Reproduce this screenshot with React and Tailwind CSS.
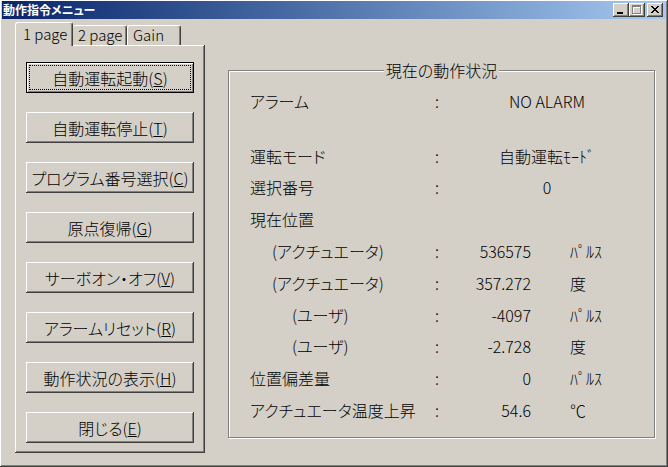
import React from 'react';

// classic 3D bevel, written out in full so Tailwind picks it up
const RAISED = "shadow-[inset_-1px_-1px_#404040,inset_1px_1px_#ffffff,inset_-2px_-2px_#808080,inset_2px_2px_#d4d0c8]";

const COMMANDS = [
  { label: "自動運転起動", key: "S" },
  { label: "自動運転停止", key: "T" },
  { label: "プログラム番号選択", key: "C" },
  { label: "原点復帰", key: "G" },
  { label: "サーボオン・オフ", key: "V" },
  { label: "アラームリセット", key: "R" },
  { label: "動作状況の表示", key: "H" },
  { label: "閉じる", key: "E" },
];

const STATUS = [
  { label: "アラーム", value: "NO ALARM", center: true },
  { gap: true },
  { label: "運転モード", value: "自動運転ﾓｰﾄﾞ", center: true },
  { label: "選択番号", value: "0", center: true },
  { label: "現在位置", noColon: true },
  { label: "(アクチュエータ)", indent: 1, value: "536575", unit: "ﾊﾟﾙｽ" },
  { label: "(アクチュエータ)", indent: 1, value: "357.272", unit: "度" },
  { label: "(ユーザ)", indent: 2, value: "-4097", unit: "ﾊﾟﾙｽ" },
  { label: "(ユーザ)", indent: 2, value: "-2.728", unit: "度" },
  { label: "位置偏差量", value: "0", unit: "ﾊﾟﾙｽ" },
  { label: "アクチュエータ温度上昇", value: "54.6", unit: "℃" },
];

const CaptionButtons = () => (
  <div className="ml-auto flex items-center">
    <div className={`w-[16px] h-[14px] bg-[#d4d0c8] flex items-end pl-[4px] pb-[3px] ${RAISED}`}>
      <svg width="6" height="2" shapeRendering="crispEdges"><rect width="6" height="2" fill="#000" /></svg>
    </div>
    <div className={`w-[16px] h-[14px] bg-[#d4d0c8] flex items-start pl-[3px] pt-[2px] ${RAISED}`}>
      <svg width="10" height="10" shapeRendering="crispEdges">
        <g fill="#fff" transform="translate(1 1)">
          <rect width="9" height="2" /><rect width="1" height="9" /><rect x="8" width="1" height="9" /><rect y="8" width="9" height="1" />
        </g>
        <g fill="#808080">
          <rect width="9" height="2" /><rect width="1" height="9" /><rect x="8" width="1" height="9" /><rect y="8" width="9" height="1" />
        </g>
      </svg>
    </div>
    <div className={`ml-[2px] w-[16px] h-[14px] bg-[#d4d0c8] flex items-start pl-[4px] pt-[3px] ${RAISED}`}>
      <svg width="8" height="7" shapeRendering="crispEdges">
        <path fill="#000" d="M0 0h2v1H0z M6 0h2v1H6z M1 1h2v1H1z M5 1h2v1H5z M2 2h4v1H2z M3 3h2v1H3z M2 4h4v1H2z M1 5h2v1H1z M5 5h2v1H5z M0 6h2v1H0z M6 6h2v1H6z" />
      </svg>
    </div>
  </div>
);

const CommandButton = ({ label, hotKey, isDefault }) => {
  const text = (
    <span className="text-[16px] leading-[20px] text-black whitespace-nowrap">
      {label}(<span className="underline underline-offset-1">{hotKey}</span>)
    </span>
  );
  if (isDefault) {
    return (
      <button className="w-[168px] h-[31px] border border-black bg-[#d4d0c8] p-[2px] shadow-[inset_1px_1px_#ffffff,inset_-1px_-1px_#808080]">
        <div className="w-full h-full border border-dotted border-black flex items-center justify-center">{text}</div>
      </button>
    );
  }
  return (
    <button className={`w-[168px] h-[31px] bg-[#d4d0c8] flex items-center justify-center ${RAISED}`}>{text}</button>
  );
};

const StatusRow = ({ label, indent, value, unit, center, noColon }) => (
  <div className="flex items-center h-[31.8px] text-[16px] leading-[20px] whitespace-nowrap">
    <span className={`w-[185px] ${indent === 1 ? "pl-[22px]" : indent === 2 ? "pl-[42px]" : ""}`}>{label}</span>
    {!noColon && <span className="w-[18px]">:</span>}
    {value && (center
      ? <span className="w-[188px] text-center">{value}</span>
      : <span className="w-[78px] text-right">{value}</span>)}
    {unit && <span className="ml-[39px]">{unit}</span>}
  </div>
);

const App = () => {
  return (
    <div className={`w-[668px] h-[467px] bg-[#d4d0c8] text-black font-light font-['Noto_Sans_CJK_JP',sans-serif] [font-feature-settings:'palt'] overflow-hidden ${RAISED}`}>

      {/* Title bar */}
      <div className="mx-[2px] mt-[1px] h-[18px] flex items-center bg-gradient-to-r from-[#0a246a] to-[#a6caf0] pl-[1px] pr-[3px]">
        <span className="text-white font-bold text-[12px] leading-none">動作指令メニュー</span>
        <CaptionButtons />
      </div>

      <div className="flex items-start pl-[15px] pt-[3px]">

        {/* Tabs + command page */}
        <div className="w-[190px] flex flex-col">
          <div className="flex items-end h-[23px]">
            <div className="relative z-10 w-[58px] h-[24px] -mb-[1px] bg-[#d4d0c8] border-l border-t border-r border-white border-r-[#404040] rounded-t-[3px] shadow-[inset_-1px_0_#808080] pl-[7px] pt-[2px] text-[15px] leading-[18px]">
              1 page
            </div>
            <div className="w-[54px] h-[20px] bg-[#d4d0c8] border-t border-r border-white border-r-[#404040] rounded-t-[3px] shadow-[inset_-1px_0_#808080] pl-[5px] text-[15px] leading-[18px]">
              2 page
            </div>
            <div className="w-[54px] h-[20px] bg-[#d4d0c8] border-l border-t border-r border-white border-r-[#404040] rounded-t-[3px] shadow-[inset_-1px_0_#808080] pl-[5px] text-[15px] leading-[18px]">
              Gain
            </div>
          </div>
          <div className={`h-[408px] flex flex-col items-center pt-[17px] gap-[19px] ${RAISED}`}>
            {COMMANDS.map((c, i) => (
              <CommandButton key={c.key} label={c.label} hotKey={c.key} isDefault={i === 0} />
            ))}
          </div>
        </div>

        {/* Status group box */}
        <div className="ml-[23px] mt-[48px] w-[427px] h-[368px] border border-[#808080] shadow-[inset_1px_1px_#ffffff,1px_1px_#ffffff] flex flex-col pl-[21px]">
          <span className="self-center -ml-[21px] -mt-[11px] px-[2px] bg-[#d4d0c8] text-[16px] leading-[20px]">現在の動作状況</span>
          <div className="mt-[5px] flex flex-col">
            {STATUS.map((r, i) => r.gap
              ? <div key={i} className="h-[23px]" />
              : <StatusRow key={i} {...r} />)}
          </div>
        </div>
      </div>
    </div>
  );
};

export default App;
